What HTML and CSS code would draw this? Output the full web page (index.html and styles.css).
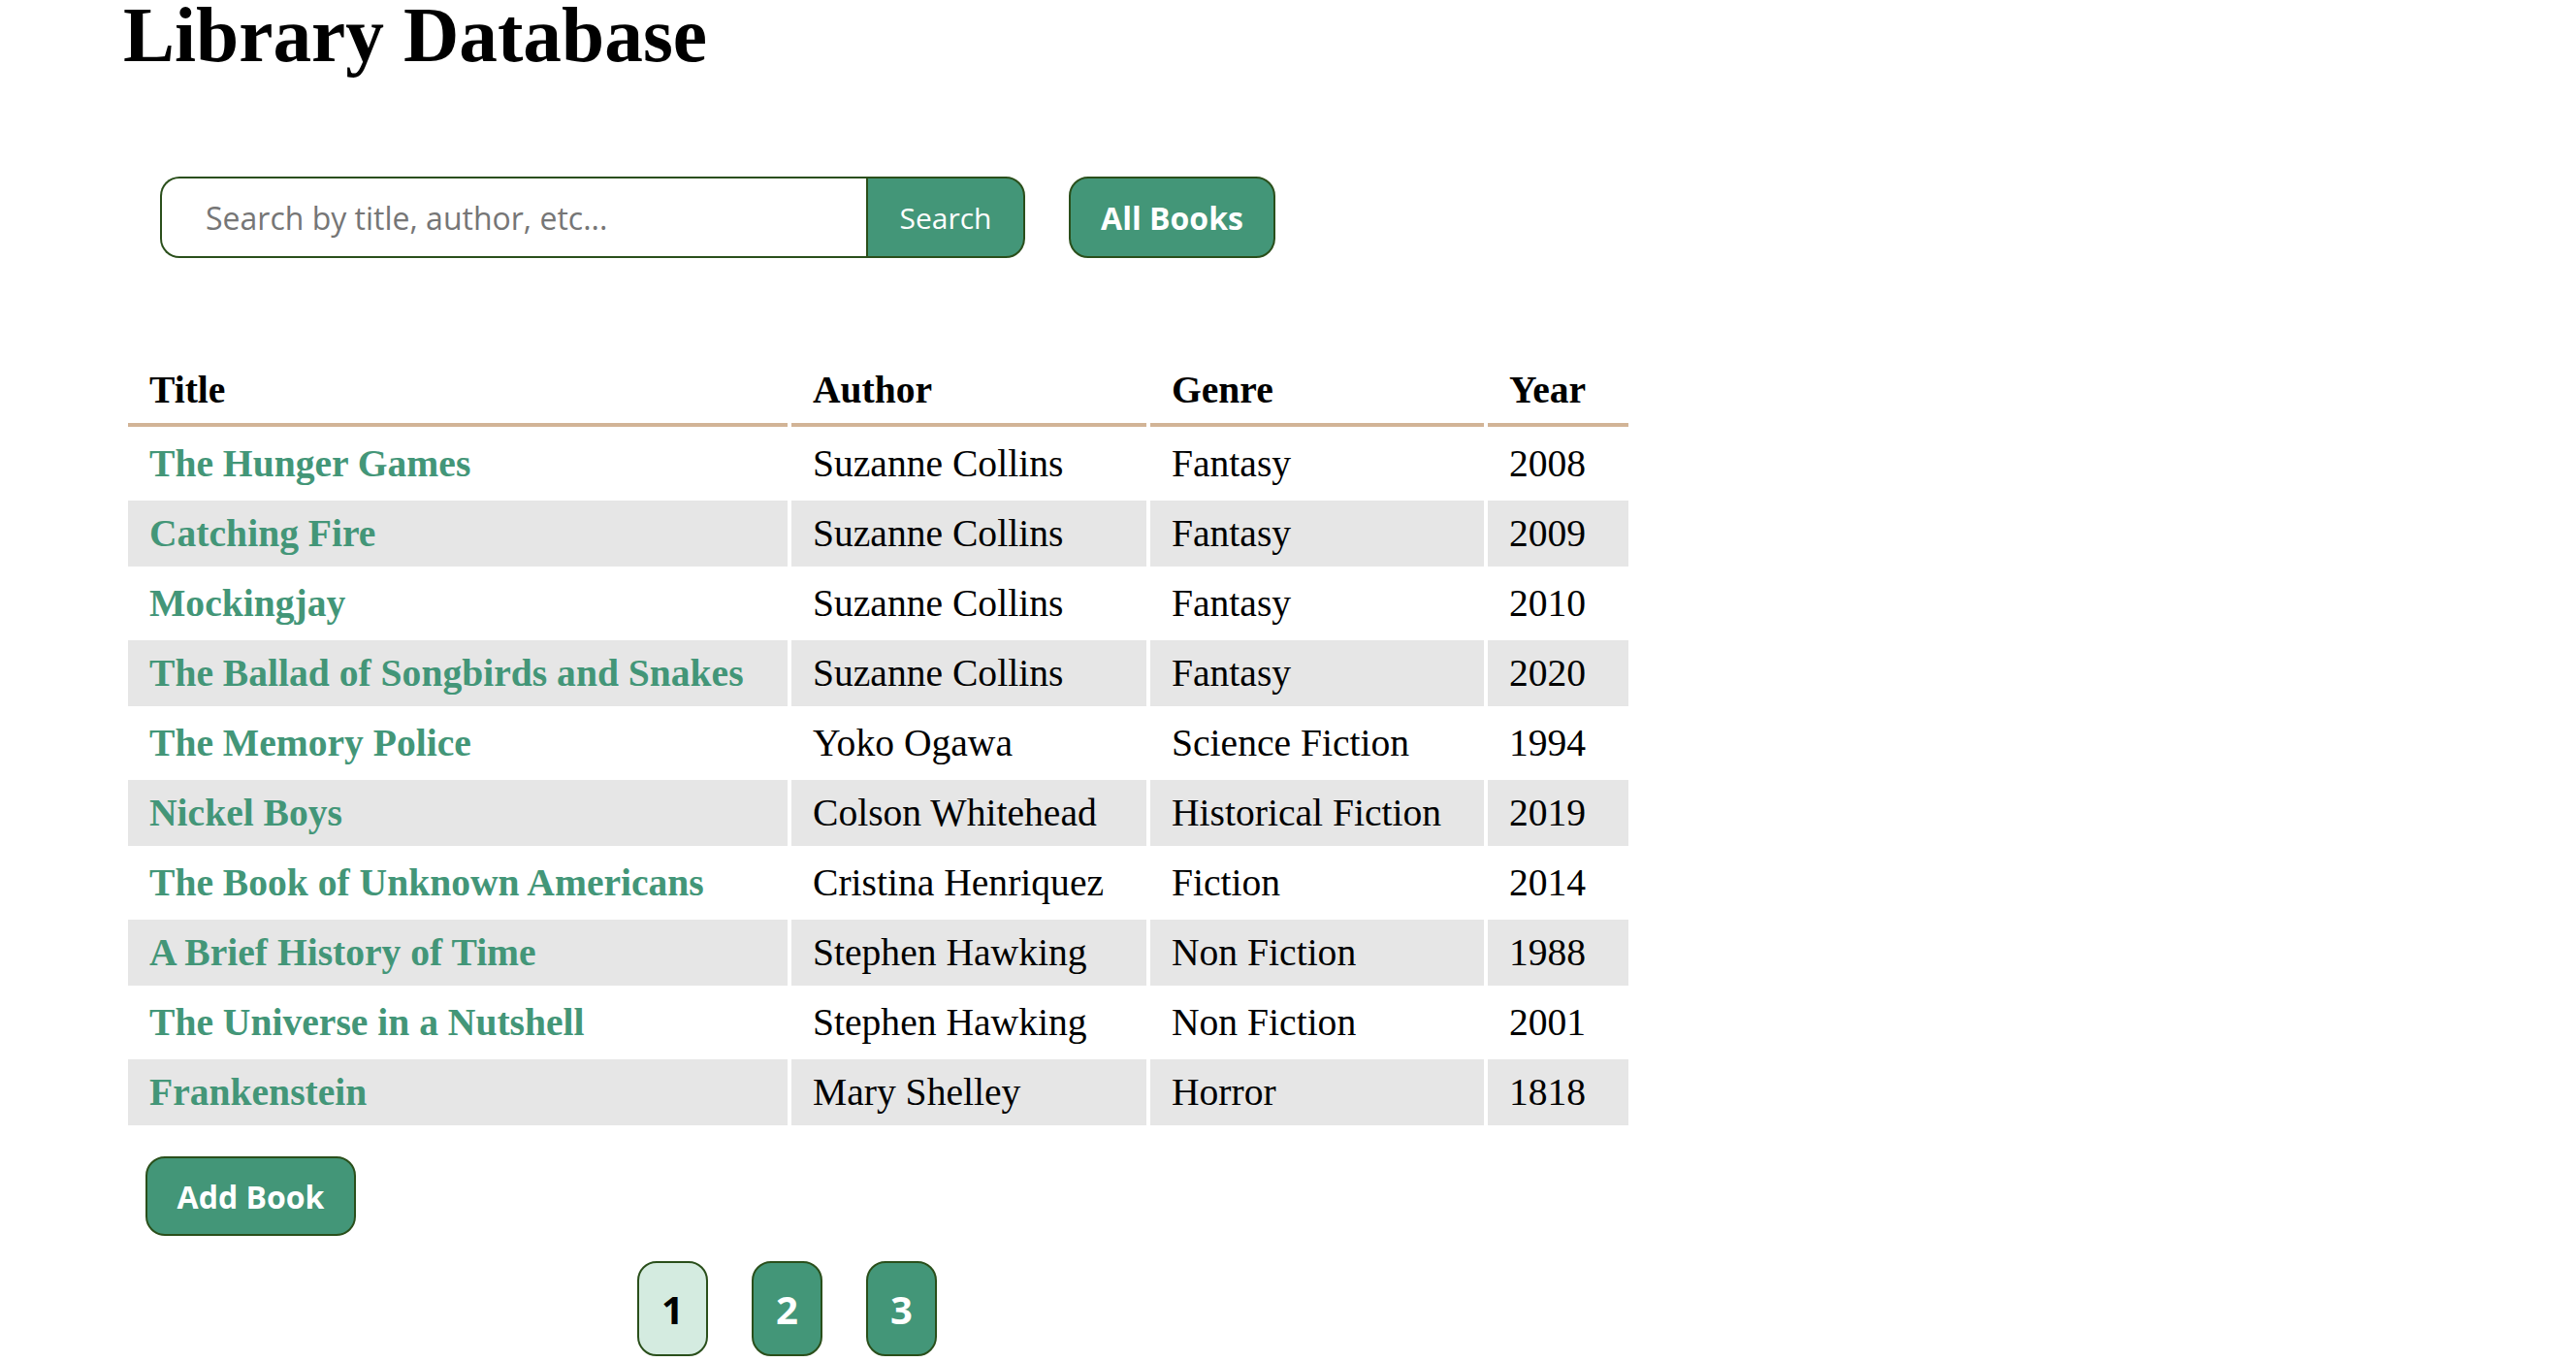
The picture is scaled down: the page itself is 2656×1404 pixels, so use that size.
FILE: index.html
```html
<!DOCTYPE html>
<html lang="en">
<head>
<meta charset="utf-8">
<title>Library Database</title>
<link rel="stylesheet" href="styles.css">
</head>
<body>
<div class="page">
  <h1 class="page-title">Library Database</h1>

  <div class="toolbar">
    <form class="search-form">
      <input class="search-input" type="text" placeholder="Search by title, author, etc...">
      <button class="btn search-btn" type="button">Search</button>
    </form>
    <button class="btn all-btn" type="button">All Books</button>
  </div>

  <table class="books">
    <colgroup>
      <col class="col-title">
      <col class="col-author">
      <col class="col-genre">
      <col class="col-year">
    </colgroup>
    <thead>
      <tr><th>Title</th><th>Author</th><th>Genre</th><th>Year</th></tr>
    </thead>
    <tbody>
      <tr><td><a class="book-link" href="#">The Hunger Games</a></td><td>Suzanne Collins</td><td>Fantasy</td><td>2008</td></tr>
      <tr><td><a class="book-link" href="#">Catching Fire</a></td><td>Suzanne Collins</td><td>Fantasy</td><td>2009</td></tr>
      <tr><td><a class="book-link" href="#">Mockingjay</a></td><td>Suzanne Collins</td><td>Fantasy</td><td>2010</td></tr>
      <tr><td><a class="book-link" href="#">The Ballad of Songbirds and Snakes</a></td><td>Suzanne Collins</td><td>Fantasy</td><td>2020</td></tr>
      <tr><td><a class="book-link" href="#">The Memory Police</a></td><td>Yoko Ogawa</td><td>Science Fiction</td><td>1994</td></tr>
      <tr><td><a class="book-link" href="#">Nickel Boys</a></td><td>Colson Whitehead</td><td>Historical Fiction</td><td>2019</td></tr>
      <tr><td><a class="book-link" href="#">The Book of Unknown Americans</a></td><td>Cristina Henriquez</td><td>Fiction</td><td>2014</td></tr>
      <tr><td><a class="book-link" href="#">A Brief History of Time</a></td><td>Stephen Hawking</td><td>Non Fiction</td><td>1988</td></tr>
      <tr><td><a class="book-link" href="#">The Universe in a Nutshell</a></td><td>Stephen Hawking</td><td>Non Fiction</td><td>2001</td></tr>
      <tr><td><a class="book-link" href="#">Frankenstein</a></td><td>Mary Shelley</td><td>Horror</td><td>1818</td></tr>
    </tbody>
  </table>

  <div class="actions">
    <button class="btn add-btn" type="button">Add Book</button>
  </div>

  <nav class="pagination">
    <button class="btn page-btn current" type="button">1</button>
    <button class="btn page-btn" type="button">2</button>
    <button class="btn page-btn" type="button">3</button>
  </nav>
</div>
</body>
</html>
```
FILE: styles.css
```css
html, body {
  margin: 0;
  padding: 0;
  background: #ffffff;
}

body {
  font-family: "Liberation Serif", "Times New Roman", serif;
  color: #000000;
  overflow: hidden;
}

.page {
  padding-left: 128px;
}

.page-title {
  margin: 0 0 0 -1px;
  font-size: 79.4px;
  line-height: 72px;
  font-weight: bold;
}

.toolbar {
  display: flex;
  align-items: center;
  gap: 45px;
  margin-top: 110px;
  margin-left: 37px;
}

.search-form {
  display: flex;
  margin: 0;
}

.search-input {
  box-sizing: border-box;
  width: 728px;
  height: 84px;
  margin: 0;
  padding: 0 0 0 45px;
  border: 2px solid #2a4f1b;
  border-right: none;
  border-radius: 20px 0 0 20px;
  font-family: "Open Sans", sans-serif;
  font-size: 32px;
  color: #000;
  outline: none;
}

.search-input::placeholder {
  color: #767676;
}

.btn {
  box-sizing: border-box;
  margin: 0;
  border: 2px solid #2a4f1b;
  background: #439678;
  color: #ffffff;
  font-family: "Open Sans", sans-serif;
  cursor: pointer;
}

.search-btn {
  width: 164px;
  height: 84px;
  padding: 0;
  border-radius: 0 20px 20px 0;
  font-size: 30px;
  font-weight: normal;
}

.all-btn {
  width: 213px;
  height: 84px;
  padding: 0;
  border-radius: 20px;
  font-size: 32px;
  font-weight: bold;
}

.books {
  margin-top: 98px;
  table-layout: fixed;
  width: 1555px;
  border-collapse: separate;
  border-spacing: 4px;
}

.col-title { width: 680px; }
.col-author { width: 366px; }
.col-genre { width: 344px; }
.col-year { width: 145px; }

.books th,
.books td {
  padding: 11px 22px;
  font-size: 39.6px;
  line-height: 46px;
  text-align: left;
  white-space: nowrap;
}

.books th {
  font-weight: bold;
  border-bottom: 4px solid #d2b496;
}

.books tbody tr:nth-child(even) td {
  background: #e6e6e6;
}

.book-link {
  color: #439678;
  font-weight: bold;
  text-decoration: none;
}

.actions {
  margin-top: 28px;
  margin-left: 22px;
}

.add-btn {
  width: 217px;
  height: 82px;
  padding: 0;
  border-radius: 20px;
  font-size: 32px;
  font-weight: bold;
}

.pagination {
  display: flex;
  gap: 45px;
  margin-top: 26px;
  margin-left: 529px;
}

.page-btn {
  width: 73px;
  height: 98px;
  padding: 0;
  border-radius: 20px;
  font-size: 40px;
  font-weight: bold;
}

.page-btn.current {
  background: #d4ebe0;
  color: #000000;
}
```
